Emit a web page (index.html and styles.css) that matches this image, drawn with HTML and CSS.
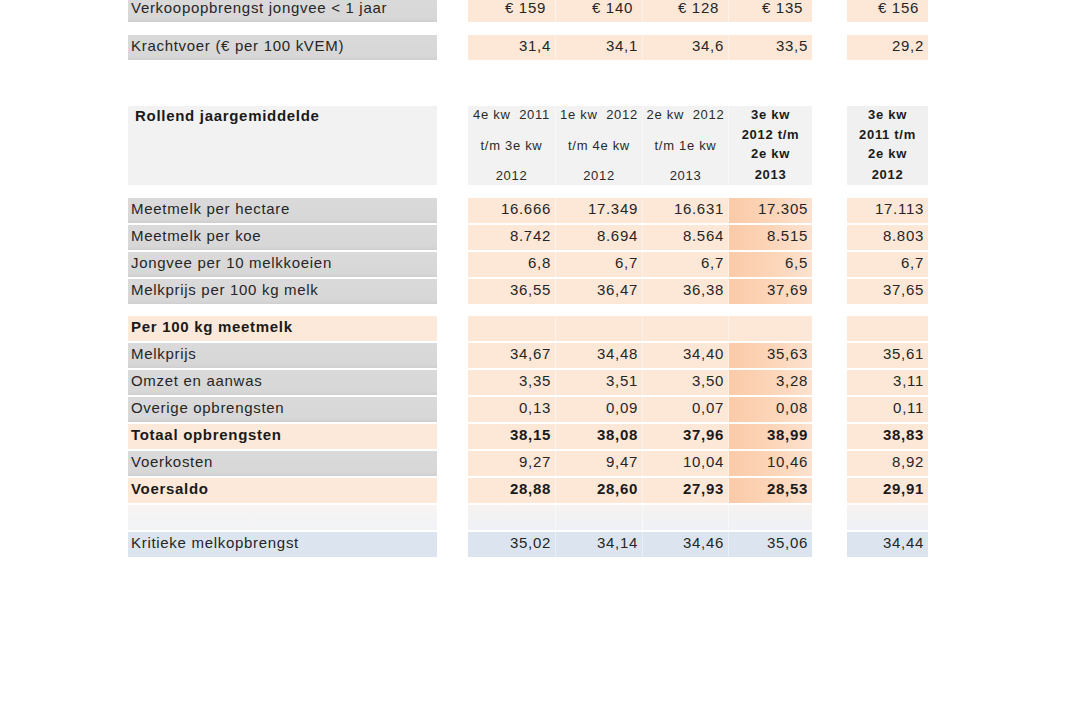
FILE: index.html
```html
<!DOCTYPE html>
<html lang="nl">
<head>
<meta charset="utf-8">
<title>Rollend jaargemiddelde</title>
<link rel="stylesheet" href="styles.css">
</head>
<body>
<div class="sheet">
  <section class="block block-top">
    <div class="row">
      <div class="label">Verkoopopbrengst jongvee &lt; 1 jaar</div>
      <div class="c w1 eur">€ 159</div><div class="c w2 eur">€ 140</div><div class="c w3 eur">€ 128</div><div class="c w4 eur">€ 135</div>
      <div class="c w5 last eur">€ 156</div>
    </div>
    <div class="row row-kv">
      <div class="label">Krachtvoer (€ per 100 kVEM)</div>
      <div class="c w1">31,4</div><div class="c w2">34,1</div><div class="c w3">34,6</div><div class="c w4">33,5</div>
      <div class="c w5 last">29,2</div>
    </div>
  </section>

  <section class="head">
    <div class="label hlabel">Rollend jaargemiddelde</div>
    <div class="hc w1"><span>4e kw&nbsp; 2011</span><span>t/m 3e kw</span><span>2012</span></div>
    <div class="hc w2"><span>1e kw&nbsp; 2012</span><span>t/m 4e kw</span><span>2012</span></div>
    <div class="hc w3"><span>2e kw&nbsp; 2012</span><span>t/m 1e kw</span><span>2013</span></div>
    <div class="hc w4 hb"><span>3e kw</span><span>2012 t/m</span><span>2e kw</span><span>2013</span></div>
    <div class="hc w5 last hb"><span>3e kw</span><span>2011 t/m</span><span>2e kw</span><span>2012</span></div>
  </section>

  <section class="block">
    <div class="row">
      <div class="label">Meetmelk per hectare</div>
      <div class="c w1">16.666</div><div class="c w2">17.349</div><div class="c w3">16.631</div><div class="c w4 hi">17.305</div>
      <div class="c w5 last">17.113</div>
    </div>
    <div class="row">
      <div class="label">Meetmelk per koe</div>
      <div class="c w1">8.742</div><div class="c w2">8.694</div><div class="c w3">8.564</div><div class="c w4 hi">8.515</div>
      <div class="c w5 last">8.803</div>
    </div>
    <div class="row">
      <div class="label">Jongvee per 10 melkkoeien</div>
      <div class="c w1">6,8</div><div class="c w2">6,7</div><div class="c w3">6,7</div><div class="c w4 hi">6,5</div>
      <div class="c w5 last">6,7</div>
    </div>
    <div class="row">
      <div class="label">Melkprijs per 100 kg melk</div>
      <div class="c w1">36,55</div><div class="c w2">36,47</div><div class="c w3">36,38</div><div class="c w4 hi">37,69</div>
      <div class="c w5 last">37,65</div>
    </div>
  </section>

  <section class="block block-per">
    <div class="row bold">
      <div class="label orange">Per 100 kg meetmelk</div>
      <div class="c w1"></div><div class="c w2"></div><div class="c w3"></div><div class="c w4"></div>
      <div class="c w5 last"></div>
    </div>
    <div class="row">
      <div class="label">Melkprijs</div>
      <div class="c w1">34,67</div><div class="c w2">34,48</div><div class="c w3">34,40</div><div class="c w4 hi">35,63</div>
      <div class="c w5 last">35,61</div>
    </div>
    <div class="row">
      <div class="label">Omzet en aanwas</div>
      <div class="c w1">3,35</div><div class="c w2">3,51</div><div class="c w3">3,50</div><div class="c w4 hi">3,28</div>
      <div class="c w5 last">3,11</div>
    </div>
    <div class="row">
      <div class="label">Overige opbrengsten</div>
      <div class="c w1">0,13</div><div class="c w2">0,09</div><div class="c w3">0,07</div><div class="c w4 hi">0,08</div>
      <div class="c w5 last">0,11</div>
    </div>
    <div class="row bold">
      <div class="label orange">Totaal opbrengsten</div>
      <div class="c w1">38,15</div><div class="c w2">38,08</div><div class="c w3">37,96</div><div class="c w4 hi">38,99</div>
      <div class="c w5 last">38,83</div>
    </div>
    <div class="row">
      <div class="label">Voerkosten</div>
      <div class="c w1">9,27</div><div class="c w2">9,47</div><div class="c w3">10,04</div><div class="c w4 hi">10,46</div>
      <div class="c w5 last">8,92</div>
    </div>
    <div class="row bold">
      <div class="label orange">Voersaldo</div>
      <div class="c w1">28,88</div><div class="c w2">28,60</div><div class="c w3">27,93</div><div class="c w4 hi">28,53</div>
      <div class="c w5 last">29,91</div>
    </div>
    <div class="row empty">
      <div class="label"></div>
      <div class="c w1"></div><div class="c w2"></div><div class="c w3"></div><div class="c w4"></div>
      <div class="c w5 last"></div>
    </div>
    <div class="row blue">
      <div class="label">Kritieke melkopbrengst</div>
      <div class="c w1">35,02</div><div class="c w2">34,14</div><div class="c w3">34,46</div><div class="c w4">35,06</div>
      <div class="c w5 last">34,44</div>
    </div>
  </section>
</div>
</body>
</html>
```

FILE: styles.css
```css
html, body {
  margin: 0;
  padding: 0;
  background: #ffffff;
}

body {
  font-family: "Liberation Sans", Arial, sans-serif;
  font-size: 15px;
  letter-spacing: 0.7px;
  color: #262626;
}

.sheet {
  margin-left: 128px;
  width: 800px;
}

.block {
  display: flex;
  flex-direction: column;
  gap: 2px;
}

.block-top {
  margin-top: -3px;
  gap: 13px;
}

.block-per {
  margin-top: 12px;
}

.row {
  display: flex;
  height: 25px;
  line-height: 22px;
}

.label {
  width: 309px;
  margin-right: 31px;
  padding-left: 3px;
  box-sizing: border-box;
  background: linear-gradient(to bottom, #dadada 0%, #d7d7d7 85%, #cfcfcf 100%);
  white-space: nowrap;
}

.c {
  box-sizing: border-box;
  text-align: right;
  padding-right: 4px;
  background: #fde8d8;
  border-left: 1px solid #fdf2ea;
}

.c.w1 { border-left: none; }

.w1 { width: 87px; }
.w2 { width: 87px; }
.w3 { width: 86px; }
.w4 { width: 84px; }
.w5 { width: 81px; }

.last {
  margin-left: 35px;
  border-left: none;
}

.eur {
  padding-right: 9px;
}

.hi {
  background: linear-gradient(to right, #fbcaa7 0%, #fcd6ba 55%, #fde2cf 100%);
}

.bold {
  font-weight: bold;
  color: #1a1a1a;
}

.label.orange {
  background: #fde9d9;
}

.empty .label {
  background: linear-gradient(to bottom, #f8f4f2 0%, #f1f3f7 100%);
}

.empty .c {
  background: linear-gradient(to bottom, #f6f2ef 0%, #eef1f6 100%);
  border-left-color: #f8f9fb;
}

.blue .label {
  background: #dce5ef;
}

.blue .c {
  background: #dce5ef;
  border-left-color: #eaf0f6;
}

.blue .c.w1 { border-left: none; }

.head {
  display: flex;
  height: 79px;
  margin-top: 46px;
  margin-bottom: 13px;
}

.hlabel {
  background: #f2f2f2;
  font-weight: bold;
  color: #1a1a1a;
  padding-left: 7px;
  line-height: 20px;
}

.hc {
  box-sizing: border-box;
  background: #f2f2f2;
  border-left: 1px solid #f8f8f8;
  display: flex;
  flex-direction: column;
  justify-content: space-between;
  align-items: center;
  font-size: 13px;
  line-height: 18px;
  color: #2a2a2a;
  white-space: nowrap;
}

.hc.w1 { border-left: none; }
.hc.last { border-left: none; background: #f0f0f0; }

.hb {
  font-weight: bold;
  justify-content: flex-start;
  color: #1a1a1a;
}

.hb span {
  height: 20px;
  line-height: 18px;
}

.hb span:last-child {
  margin-top: 1px;
}
```
